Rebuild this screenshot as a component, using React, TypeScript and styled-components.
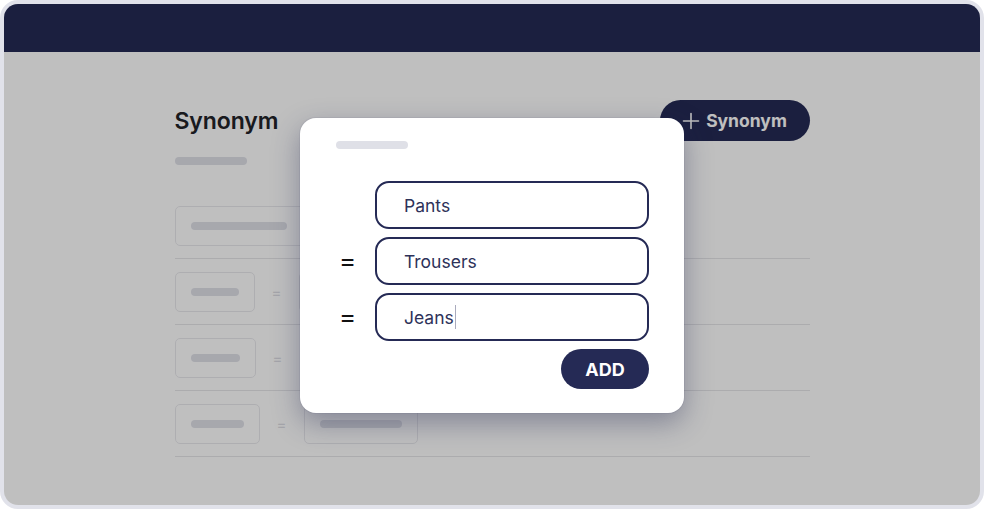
import React from "react";
import styled, { createGlobalStyle } from "styled-components";

const GlobalStyle = createGlobalStyle`
  html, body { margin: 0; padding: 0; background: #ffffff; }
  body { font-family: Inter, "Noto Sans", "Liberation Sans", sans-serif; }
  * { box-sizing: border-box; }
`;

const Frame = styled.div`
  position: relative;
  width: 984px;
  height: 509px;
  border: 4px solid #e1e2ea;
  border-radius: 18px;
  overflow: hidden;
  background: #ffffff;
`;

const Header = styled.header`
  height: 48px;
  background: #252a55;
`;

const Main = styled.main`
  width: 635px;
  margin: 0 auto;
  padding-top: 48px;
`;

const TitleRow = styled.div`
  display: flex;
  align-items: center;
  justify-content: space-between;
  height: 41px;
`;

const Title = styled.h1`
  margin: 0;
  font-size: 23px;
  font-weight: 600;
  color: #222329;
  letter-spacing: -0.1px;
`;

const PillButton = styled.button<{ $w: number; $h: number; $size: number }>`
  display: inline-flex;
  align-items: center;
  justify-content: center;
  gap: 6px;
  width: ${(p) => p.$w}px;
  height: ${(p) => p.$h}px;
  border: none;
  border-radius: 999px;
  background: #252a55;
  color: #ffffff;
  font-family: inherit;
  font-size: ${(p) => p.$size}px;
  font-weight: 700;
  padding: 0;
`;

const Skeleton = styled.div<{ $w: number }>`
  width: ${(p) => p.$w}px;
  height: 8px;
  border-radius: 4px;
  background: #dfe0e7;
`;

const SubBar = styled(Skeleton)`
  margin-top: 16px;
`;

const List = styled.div`
  margin-top: 28px;
`;

const Row = styled.div`
  display: flex;
  align-items: center;
  gap: 16px;
  padding: 13px 0 12px;
  border-bottom: 1px solid #e6e6e8;
`;

const Cell = styled.div<{ $w: number }>`
  width: ${(p) => p.$w}px;
  height: 40px;
  border: 1px solid #e9e9ed;
  border-radius: 5px;
  display: flex;
  align-items: center;
  padding-left: 15px;
`;

const SmallEq = styled.span`
  width: 12px;
  text-align: center;
  font-size: 15px;
  color: #dcdde3;
`;

const Overlay = styled.div`
  position: absolute;
  inset: 0;
  background: rgba(0, 0, 0, 0.25);
  display: flex;
  justify-content: center;
  align-items: flex-start;
  padding-top: 114px;
`;

const Modal = styled.div`
  width: 384px;
  height: 295px;
  background: #ffffff;
  border-radius: 16px;
  padding: 23px 35px 24px 36px;
  box-shadow: 0 0 0 1px rgba(37, 42, 85, 0.06), 0 10px 28px rgba(37, 42, 85, 0.38);
`;

const Form = styled.div`
  margin-top: 32px;
  display: grid;
  grid-template-columns: 39px 274px;
  row-gap: 8px;
  align-items: center;
`;

const Equals = styled.span`
  font-size: 26px;
  line-height: 1;
  color: #111111;
  padding-left: 3px;
`;

const Field = styled.div`
  height: 48px;
  border: 2px solid #252a55;
  border-radius: 14px;
  padding-left: 27px;
  display: flex;
  align-items: center;
  font-size: 17.5px;
  color: #2e3259;
`;

const Caret = styled.span`
  display: inline-block;
  width: 1px;
  height: 24px;
  margin-left: 1px;
  background: #a9abbd;
`;

const Actions = styled.div`
  margin-top: 8px;
  display: flex;
  justify-content: flex-end;
`;

const PlusIcon = () => (
  <svg width="18" height="18" viewBox="0 0 18 18" fill="none">
    <path d="M9 1.5v15M1.5 9h15" stroke="currentColor" strokeWidth="1.6" strokeLinecap="round" />
  </svg>
);

const rows = [
  { a: 80, bar: 48 },
  { a: 81, bar: 49 },
  { a: 85, bar: 53 },
];

export default function App() {
  return (
    <>
      <GlobalStyle />
      <Frame>
        <Header />
        <Main>
          <TitleRow>
            <Title>Synonym</Title>
            <PillButton $w={150} $h={41} $size={17.5}>
              <PlusIcon />
              Synonym
            </PillButton>
          </TitleRow>
          <SubBar $w={72} />
          <List>
            <Row>
              <Cell $w={260}>
                <Skeleton $w={96} />
              </Cell>
            </Row>
            {rows.map((r, i) => (
              <Row key={i}>
                <Cell $w={r.a}>
                  <Skeleton $w={r.bar} />
                </Cell>
                <SmallEq>=</SmallEq>
                <Cell $w={114}>
                  <Skeleton $w={82} />
                </Cell>
              </Row>
            ))}
          </List>
        </Main>
        <Overlay>
          <Modal>
            <Skeleton $w={72} />
            <Form>
              <span />
              <Field>Pants</Field>
              <Equals>=</Equals>
              <Field>Trousers</Field>
              <Equals>=</Equals>
              <Field>
                Jeans
                <Caret />
              </Field>
            </Form>
            <Actions>
              <PillButton $w={88} $h={40} $size={18}>
                ADD
              </PillButton>
            </Actions>
          </Modal>
        </Overlay>
      </Frame>
    </>
  );
}
